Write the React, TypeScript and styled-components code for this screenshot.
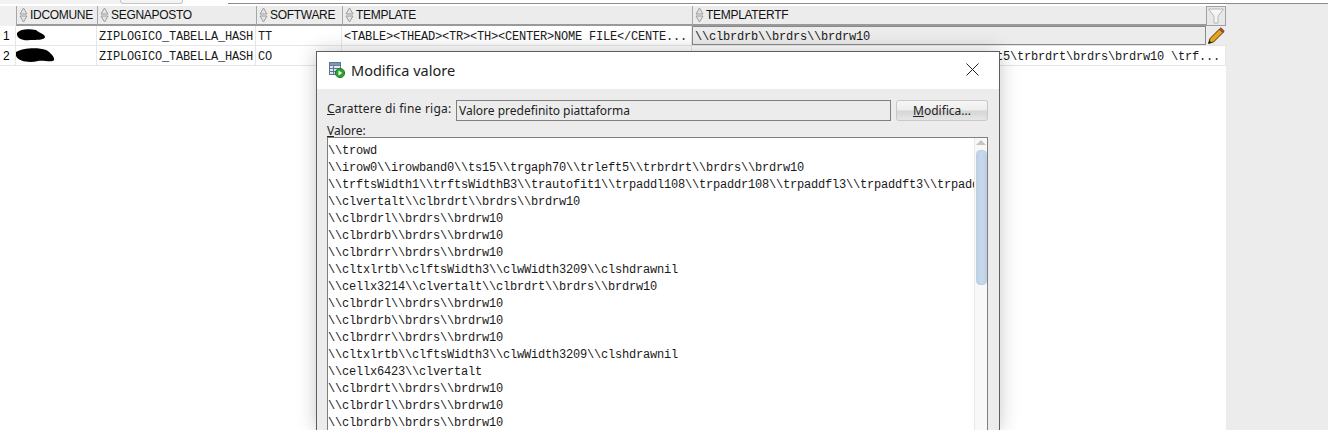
import styled, { createGlobalStyle } from "styled-components";

const GlobalStyle = createGlobalStyle`
  html, body {
    margin: 0;
    padding: 0;
    background: #ffffff;
    overflow: hidden;
  }
  * {
    box-sizing: border-box;
  }
`;

const Page = styled.div`
  position: relative;
  display: flex;
  flex-direction: column;
  width: 1328px;
  height: 430px;
  overflow: hidden;
  font-family: "Liberation Sans", Arial, sans-serif;
  color: #000;
`;

const TopStrip = styled.div`
  display: flex;
  height: 4px;
  flex: none;
`;

const StripStub = styled.div`
  width: 120px;
  background: #f2f2f2;
`;

const StripTab = styled.div`
  width: 63px;
  background: #f4f4f4;
  border: 1px solid #c4c4c4;
  border-top: none;
  border-radius: 0 0 3px 3px;
`;

const StripGap = styled.div`
  width: 45px;
  background: #fff;
`;

const StripLine = styled.div`
  flex: 1;
  border-bottom: 1px solid #8c8c8c;
  background: #fff;
`;

const Main = styled.div`
  flex: 1;
  min-height: 0;
  display: flex;
`;

const TablePane = styled.div`
  width: 1226px;
  display: flex;
  flex-direction: column;
  padding-top: 2px;
  background: #fff;
`;

const SidePane = styled.div`
  flex: 1;
  background: #ececec;
`;

const HeaderRow = styled.div`
  display: flex;
  height: 20px;
  flex: none;
  background: #ececec;
`;

const HeaderCorner = styled.div`
  width: 16px;
  flex: none;
  background: #f0f0f0;
`;

const HeaderCell = styled.div<{ $w: number }>`
  width: ${(p) => p.$w}px;
  flex: none;
  display: flex;
  align-items: center;
  gap: 2px;
  padding-left: 2px;
  border-left: 1px solid #a8a8a8;
  border-bottom: 2px solid #9a9a9a;
  font-size: 12px;
  letter-spacing: -0.3px;
  color: #111;
  white-space: nowrap;
  overflow: hidden;
`;

const FilterCell = styled.div`
  flex: 1;
  display: flex;
  justify-content: flex-start;
  background: #ececec;
`;

const Row = styled.div`
  display: flex;
  height: 20px;
  flex: none;
  border-bottom: 1px solid #e6e6e6;
  background: #fff;
`;

const RowNumber = styled.div`
  width: 16px;
  flex: none;
  padding-left: 3px;
  font-size: 12px;
  line-height: 20px;
  border-right: 1px solid #e6e6e6;
`;

const Cell = styled.div<{ $w: number; $selected?: boolean; $right?: boolean }>`
  position: relative;
  width: ${(p) => p.$w}px;
  flex: none;
  padding-left: ${(p) => (p.$selected ? 3 : 2)}px;
  padding-right: ${(p) => (p.$right ? 5 : 0)}px;
  text-align: ${(p) => (p.$right ? "right" : "left")};
  font-family: "Liberation Mono", "Courier New", monospace;
  font-size: 12px;
  letter-spacing: -0.2px;
  line-height: 23px;
  white-space: pre;
  overflow: hidden;
  border-right: 1px solid #e6e6e6;
  background: ${(p) => (p.$selected ? "#ececec" : "transparent")};
  outline: ${(p) => (p.$selected ? "1px solid #8a8a8a" : "none")};
  outline-offset: -1px;
  color: #1a1a1a;
`;

const Redaction = styled.svg`
  position: absolute;
  left: 0;
  top: 2px;
`;

const RowTail = styled.div`
  flex: 1;
  display: flex;
  align-items: center;
  padding-left: 1px;
  background: #ececec;
`;

const Dialog = styled.div`
  position: absolute;
  left: 316px;
  top: 51px;
  width: 684px;
  height: 379px;
  background: #ececec;
  border: 1px solid #5e5e5e;
  border-bottom: none;
  box-shadow: 0 0 18px rgba(0, 0, 0, 0.22);
  display: flex;
  flex-direction: column;
`;

const TitleBar = styled.div`
  height: 37px;
  flex: none;
  background: #fff;
  display: flex;
  align-items: center;
  padding: 0 20px 2px 12px;
  gap: 6px;
  color: #222;
`;

const TitleText = styled.span`
  flex: 1;
  font-family: "Noto Sans", "Liberation Sans", sans-serif;
  font-size: 14.5px;
`;

const DialogBody = styled.div`
  flex: 1;
  min-height: 0;
  padding: 10px 11px 0 10px;
  display: flex;
  flex-direction: column;
`;

const LineEndRow = styled.div`
  display: flex;
  align-items: center;
  height: 22px;
  flex: none;
`;

const FieldLabel = styled.span`
  font-family: "Noto Sans", "Liberation Sans", sans-serif;
  font-size: 12px;
  color: #222;
  white-space: nowrap;
  & u {
    text-decoration-thickness: 1px;
  }
`;

const LineEndLabel = styled(FieldLabel)`
  width: 124px;
  flex: none;
  letter-spacing: 0.22px;
  margin-top: -3px;
`;

const ReadonlyField = styled.div`
  width: 435px;
  height: 21px;
  margin-left: 5px;
  padding-left: 2px;
  border: 1px solid #7f7f7f;
  background: #ececec;
  font-family: "Noto Sans", "Liberation Sans", sans-serif;
  font-size: 12px;
  line-height: 19px;
  color: #222;
`;

const ActionButton = styled.button`
  width: 92px;
  height: 21px;
  margin-left: 5px;
  padding: 0;
  border: 1px solid #c8c8c8;
  border-radius: 3px;
  background: linear-gradient(#f6f6f6 0%, #eeeeee 45%, #d6d6d6 55%, #e6e6e6 100%);
  font-family: "Noto Sans", "Liberation Sans", sans-serif;
  font-size: 12px;
  color: #222;
`;

const ValueLabel = styled(FieldLabel)`
  display: block;
  margin-top: 1px;
  line-height: 17px;
  height: 15px;
`;

const EditorBox = styled.div`
  flex: 1;
  min-height: 0;
  display: flex;
  background: #fff;
  border: 1px solid #7f7f7f;
  border-bottom: none;
`;

const EditorText = styled.pre`
  flex: 1;
  min-width: 0;
  margin: 0;
  padding: 5px 0 0 0;
  overflow: hidden;
  font-family: "Liberation Mono", "Courier New", monospace;
  font-size: 12px;
  letter-spacing: -0.2px;
  line-height: 17px;
  color: #1a1a1a;
`;

const ScrollBar = styled.div`
  width: 13px;
  flex: none;
  background: #f8f8f8;
  border-left: 1px solid #e8e8e8;
  display: flex;
  flex-direction: column;
  align-items: center;
`;

const ScrollArrow = styled.div`
  width: 0;
  height: 0;
  margin-top: 2px;
  border-left: 5px solid transparent;
  border-right: 5px solid transparent;
  border-bottom: 5px solid #c4c4c4;
`;

const ScrollThumb = styled.div`
  width: 11px;
  height: 135px;
  margin-top: 5px;
  border: 1px solid #bccfe4;
  border-radius: 4px;
  background: linear-gradient(90deg, #bdd1e7, #c8d9ec 50%, #bdd1e7);
`;

const SortIcon = () => (
  <svg width="9" height="16" viewBox="0 0 9 16">
    <path d="M4.5 1 L8 7 H1 Z" fill="#e4e4e4" stroke="#9c9c9c" />
    <path d="M4.5 15 L8 9 H1 Z" fill="#e4e4e4" stroke="#9c9c9c" />
  </svg>
);

const FunnelIcon = () => (
  <svg width="20" height="20" viewBox="0 0 20 20">
    <rect x="0.5" y="0.5" width="19" height="19" fill="#e8e8e8" stroke="#a0a0a0" />
    <path d="M2.5 3 H17.5 L12 10 V17 H8 V10 Z" fill="#f6f6f6" stroke="#b4b4b4" />
  </svg>
);

const PencilIcon = () => (
  <svg width="18" height="18" viewBox="0 0 18 18">
    <path d="M1.5 16.5 L3 11.5 L12.5 2 L16 5.5 L6.5 15 Z" fill="#e9a21c" stroke="#4a3510" strokeWidth="1" />
    <path d="M12.5 2 L14 0.8 L17.2 4 L16 5.5 Z" fill="#c8502a" stroke="#6e2c18" strokeWidth="0.8" />
    <path d="M1.5 16.5 L2.4 13.4 L4.6 15.6 Z" fill="#1c1c1c" />
  </svg>
);

const DialogIcon = () => (
  <svg width="16" height="16" viewBox="0 0 16 16">
    <rect x="0.5" y="0.5" width="11" height="12" fill="#dfe7f2" stroke="#5f7590" />
    <path d="M0.5 3.5 H11.5 M0.5 6.5 H11.5 M0.5 9.5 H11.5 M4.5 3.5 V12.5" stroke="#5f7590" />
    <rect x="1" y="1" width="10" height="2.4" fill="#7e96b4" />
    <circle cx="11" cy="11" r="4.6" fill="#2fa32f" stroke="#1d7a1d" />
    <path d="M9.5 8.6 L13.2 11 L9.5 13.4 Z" fill="#fff" />
  </svg>
);

const CloseIcon = () => (
  <svg width="13" height="13" viewBox="0 0 13 13">
    <path d="M0.5 0.5 L12.5 12.5 M12.5 0.5 L0.5 12.5" stroke="#222" strokeWidth="1" />
  </svg>
);

const columns = [
  { name: "IDCOMUNE", w: 81 },
  { name: "SEGNAPOSTO", w: 159 },
  { name: "SOFTWARE", w: 86 },
  { name: "TEMPLATE", w: 350 },
  { name: "TEMPLATERTF", w: 514 },
];

const editorLines = [
  "\\\\trowd",
  "\\\\irow0\\\\irowband0\\\\ts15\\\\trgaph70\\\\trleft5\\\\trbrdrt\\\\brdrs\\\\brdrw10",
  "\\\\trftsWidth1\\\\trftsWidthB3\\\\trautofit1\\\\trpaddl108\\\\trpaddr108\\\\trpaddfl3\\\\trpaddft3\\\\trpaddb108",
  "\\\\clvertalt\\\\clbrdrt\\\\brdrs\\\\brdrw10",
  "\\\\clbrdrl\\\\brdrs\\\\brdrw10",
  "\\\\clbrdrb\\\\brdrs\\\\brdrw10",
  "\\\\clbrdrr\\\\brdrs\\\\brdrw10",
  "\\\\cltxlrtb\\\\clftsWidth3\\\\clwWidth3209\\\\clshdrawnil",
  "\\\\cellx3214\\\\clvertalt\\\\clbrdrt\\\\brdrs\\\\brdrw10",
  "\\\\clbrdrl\\\\brdrs\\\\brdrw10",
  "\\\\clbrdrb\\\\brdrs\\\\brdrw10",
  "\\\\clbrdrr\\\\brdrs\\\\brdrw10",
  "\\\\cltxlrtb\\\\clftsWidth3\\\\clwWidth3209\\\\clshdrawnil",
  "\\\\cellx6423\\\\clvertalt",
  "\\\\clbrdrt\\\\brdrs\\\\brdrw10",
  "\\\\clbrdrl\\\\brdrs\\\\brdrw10",
  "\\\\clbrdrb\\\\brdrs\\\\brdrw10",
];

const App = () => {
  return (
    <Page>
      <GlobalStyle />
      <TopStrip>
        <StripStub />
        <StripTab />
        <StripGap />
        <StripLine />
      </TopStrip>
      <Main>
        <TablePane>
          <HeaderRow>
            <HeaderCorner />
            {columns.map((c) => (
              <HeaderCell key={c.name} $w={c.w}>
                <SortIcon />
                {c.name}
              </HeaderCell>
            ))}
            <FilterCell>
              <FunnelIcon />
            </FilterCell>
          </HeaderRow>
          <Row>
            <RowNumber>1</RowNumber>
            <Cell $w={81}>
              <Redaction width="32" height="14" viewBox="0 0 32 14">
                <path d="M1 5 C5 0 14 1 20 2 C23 5 29 6 29 9 C29 12 20 12 14 12 C8 13 0 11 1 5 Z" fill="#000" />
              </Redaction>
            </Cell>
            <Cell $w={159}>ZIPLOGICO_TABELLA_HASH</Cell>
            <Cell $w={86}>TT</Cell>
            <Cell $w={350}>{"<TABLE><THEAD><TR><TH><CENTER>NOME FILE</CENTE..."}</Cell>
            <Cell $w={514} $selected>
              {"\\\\clbrdrb\\\\brdrs\\\\brdrw10"}
            </Cell>
            <RowTail>
              <PencilIcon />
            </RowTail>
          </Row>
          <Row>
            <RowNumber>2</RowNumber>
            <Cell $w={81}>
              <Redaction width="42" height="16" viewBox="0 0 42 16">
                <path d="M0 4 C6 0 22 -1 30 2 C34 4 39 9 38 12 C36 15 28 12 22 13 C14 15 3 14 0 8 Z" fill="#000" />
              </Redaction>
            </Cell>
            <Cell $w={159}>ZIPLOGICO_TABELLA_HASH</Cell>
            <Cell $w={86}>CO</Cell>
            <Cell $w={350} />
            <Cell $w={534} $right>
              {"\\trleft5\\trbrdrt\\brdrs\\brdrw10 \\trf..."}
            </Cell>
          </Row>
        </TablePane>
        <SidePane />
      </Main>
      <Dialog>
        <TitleBar>
          <DialogIcon />
          <TitleText>Modifica valore</TitleText>
          <CloseIcon />
        </TitleBar>
        <DialogBody>
          <LineEndRow>
            <LineEndLabel>
              <u>C</u>arattere di fine riga:
            </LineEndLabel>
            <ReadonlyField>Valore predefinito piattaforma</ReadonlyField>
            <ActionButton>
              <u>M</u>odifica...
            </ActionButton>
          </LineEndRow>
          <ValueLabel>
            <u>V</u>alore:
          </ValueLabel>
          <EditorBox>
            <EditorText>{editorLines.join("\n")}</EditorText>
            <ScrollBar>
              <ScrollArrow />
              <ScrollThumb />
            </ScrollBar>
          </EditorBox>
        </DialogBody>
      </Dialog>
    </Page>
  );
};

export default App;
